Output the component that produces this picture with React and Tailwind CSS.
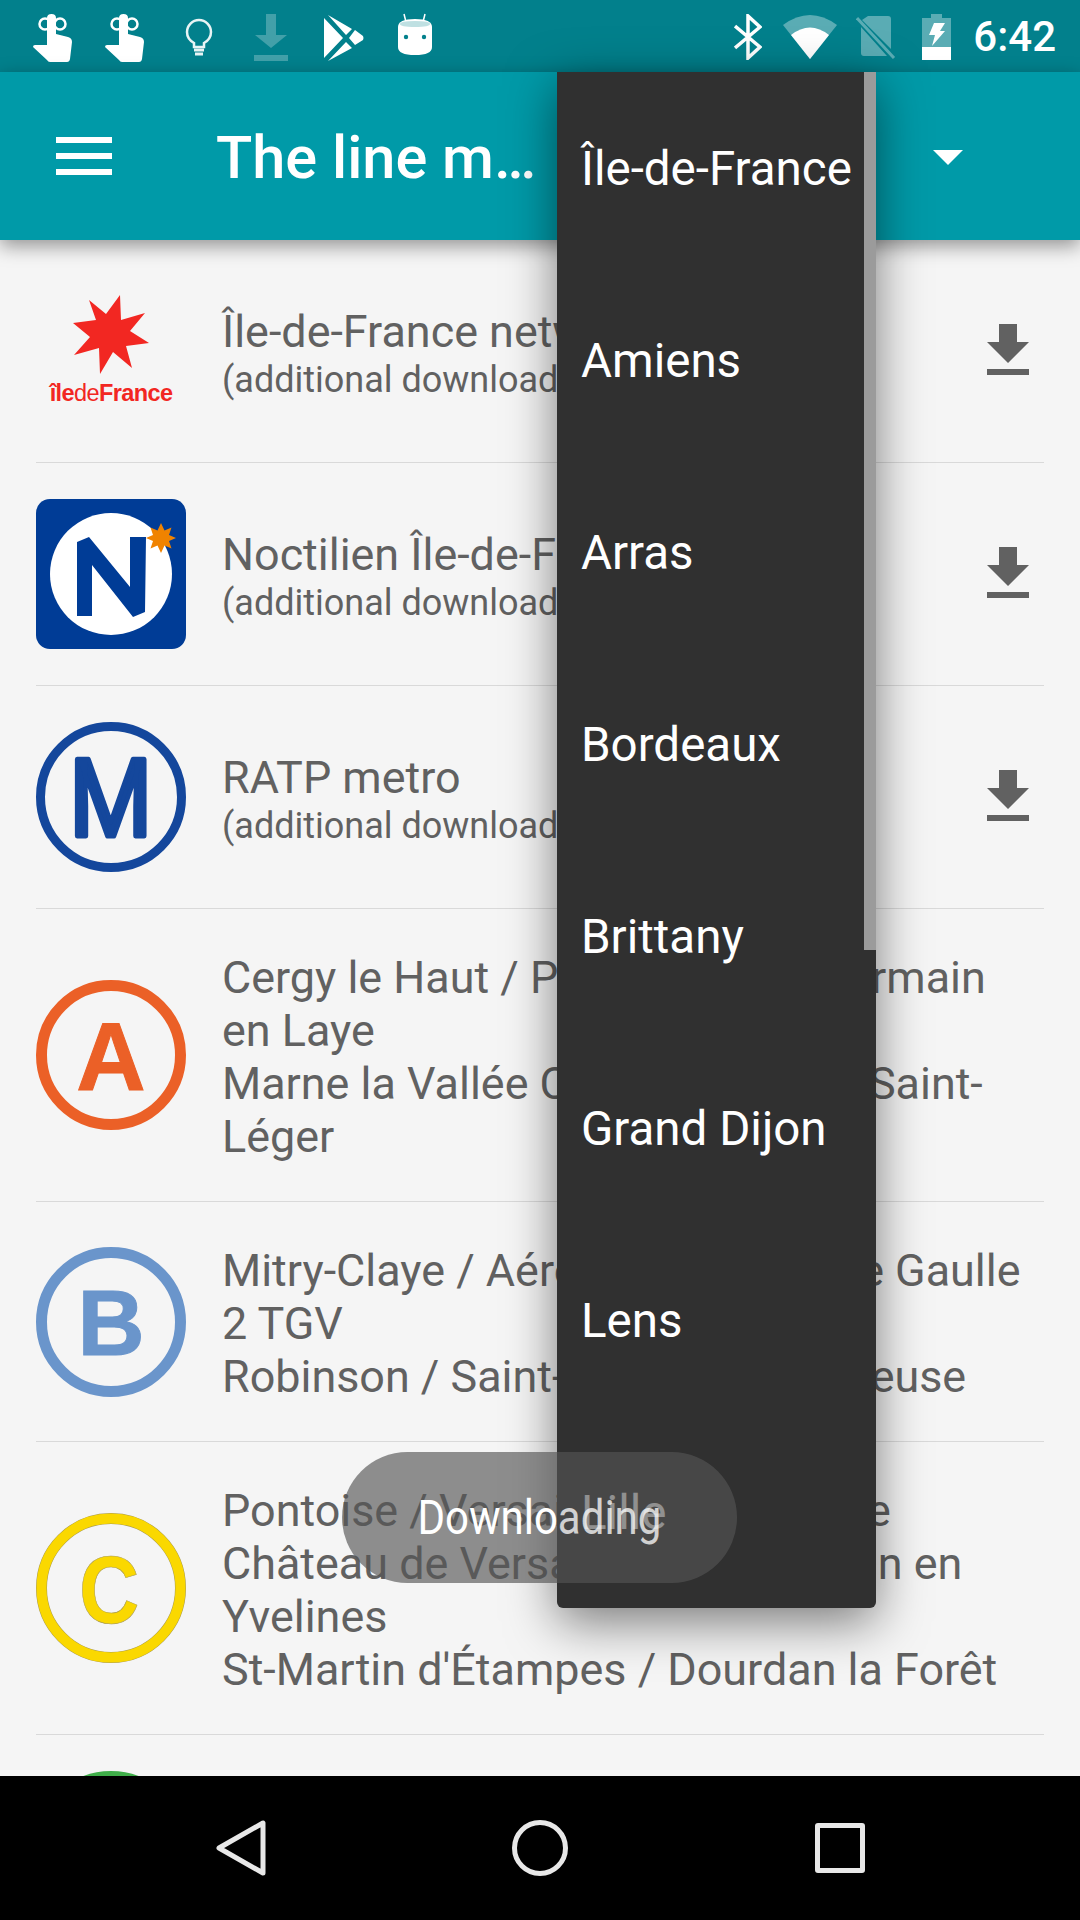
const FONT = { fontFamily: 'Roboto, sans-serif' };
const LOGO_FONT = '"Liberation Sans", sans-serif';

const HandIcon = ({ className }) => (
  <svg className={className} viewBox="0 0 40 48" fill="white">
    <path d="M14 18 L14 4 Q14 0 18.500 0 Q23 0 23 4 L23 20 L35 23 Q39 24 39 28 L37 45 Q36.500 48 34 48 L17 48 Q15 48 14 46 L0 33 Q0 31 2 31 L14 31 Z" />
    <circle cx="12" cy="10" r="5.500" fill="none" stroke="white" strokeWidth="2.500" />
    <circle cx="27" cy="10" r="5.500" fill="none" stroke="white" strokeWidth="2.500" />
  </svg>
);

const StatusBar = () => (
  <div className="h-[72px] shrink-0 bg-[#02808c] flex items-center">
    <div className="flex items-center pl-[33px] mt-[3px]">
      <HandIcon className="w-[40px] h-[48px]" />
      <HandIcon className="w-[40px] h-[48px] ml-[32px]" />
      <svg className="w-[28px] h-[40px] ml-[40px]" viewBox="0 0 28 40" fill="none" stroke="#e8f4f5" strokeWidth="2.500">
        <path d="M9 29 L9 25 Q2 21 2 14 A12 12 0 0 1 26 14 Q26 21 19 25 L19 29 Z" />
        <path d="M9 32 H19 M10 36 H18" strokeWidth="3" />
      </svg>
      <svg className="w-[34px] h-[48px] ml-[41px]" viewBox="0 0 34 48" fill="white" opacity="0.25">
        <path d="M12 0 H22 V21 H33 L17 34 L1 21 H12 Z M0 41 H34 V47 H0 Z" />
      </svg>
      <svg className="w-[40px] h-[46px] ml-[36px]" viewBox="0 0 40 46" fill="white">
        <path d="M0 3 L19 23 L0 43 Z M4 0 L28 14 L22 20 Z M4 46 L22 27 L28 33 Z M31 15 L39 21 Q40 23 39 25 L31 30 L25 23 Z" />
      </svg>
      <svg className="w-[36px] h-[44px] ml-[33px] mb-[6px]" viewBox="0 0 36 44" fill="white">
        <path d="M7 1 L9 9 M28 1 L26 9" stroke="white" strokeWidth="1.500" />
        <path d="M1 14 Q1 6 18 6 Q35 6 35 14 L35 34 Q35 42 18 42 Q1 42 1 34 Z" />
        <path d="M3 11 Q3 8 18 8 Q33 8 33 11 Q33 14 18 14 Q3 14 3 11 Z" fill="#bfe0e2" />
        <circle cx="9" cy="24" r="2.200" fill="#02808c" />
        <circle cx="27" cy="24" r="2.200" fill="#02808c" />
      </svg>
    </div>
    <div className="ml-auto flex items-center pr-[24px] mt-[2px]">
      <svg className="w-[28px] h-[46px]" viewBox="0 0 28 46" fill="none" stroke="white" strokeWidth="3.500">
        <path d="M1 12 L26 33 L14 44 L14 2 L26 13 L1 34" />
      </svg>
      <svg className="w-[54px] h-[44px] ml-[21px]" viewBox="0 0 54 44">
        <path d="M0 10 Q27 -10 54 10 L27 44 Z" fill="white" opacity="0.35" />
        <path d="M8 20 Q27 5 46 20 L27 44 Z" fill="white" />
      </svg>
      <svg className="w-[40px] h-[44px] ml-[19px]" viewBox="0 0 40 44" fill="white" opacity="0.35">
        <path d="M12 1 H32 Q35 1 35 4 V34 L6 5 Z M5 12 L31 41 H8 Q5 41 5 38 Z" />
        <path d="M1 3 L38 43" stroke="white" strokeWidth="3" />
      </svg>
      <svg className="w-[29px] h-[46px] ml-[26px]" viewBox="0 0 29 46">
        <path d="M9 0 H20 V4 H29 V46 H0 V4 H9 Z" fill="white" opacity="0.35" />
        <path d="M0 33 H29 V46 H0 Z" fill="white" />
        <path d="M12 9 H23 L18 17 H23 L10 32 L13 21 H7 Z" fill="white" />
      </svg>
      <span className="ml-[22px] text-[42px] leading-none text-white font-medium">6:42</span>
    </div>
  </div>
);

const Toolbar = () => (
  <div className="h-[168px] shrink-0 bg-[#009aa8] flex items-center relative z-10 shadow-[0_6px_18px_rgba(0,0,0,0.4)]">
    <div className="ml-[56px] w-[56px] flex flex-col gap-[10px]">
      <div className="h-[6px] bg-white" />
      <div className="h-[6px] bg-white" />
      <div className="h-[6px] bg-white" />
    </div>
    <div className="ml-[104px] mt-[6px] text-[59.500px] leading-none font-medium text-white whitespace-nowrap">The line m…</div>
    <div className="ml-auto mr-[117px] mt-[3px] w-0 h-0 border-l-[15px] border-r-[15px] border-t-[15px] border-l-transparent border-r-transparent border-t-white" />
  </div>
);

const DownloadIcon = () => (
  <svg className="w-[72px] h-[72px] shrink-0" viewBox="0 0 24 24" fill="#616161">
    <path d="M19 9h-4V3H9v6H5l7 7 7-7zM5 18v2h14v-2H5z" />
  </svg>
);

const IdfLogo = () => (
  <div className="w-[150px] h-[150px] flex flex-col items-center pt-[19px] shrink-0">
    <svg className="w-[76px] h-[79px]" viewBox="0 0 76 79" fill="#f22722">
      <path d="M16 5 L33 19 L47 0 L48 25 L72 18 L57 36 L76 48 L53 51 L59 73 L40 57 L27 79 L26 53 L1 60 L17 42 L0 28 L23 25 Z" />
    </svg>
    <div className="mt-[9px] text-[23.500px] leading-[20px] text-[#f22722] font-bold tracking-[-0.6px] whitespace-nowrap" style={{ fontFamily: LOGO_FONT }}>
      île<span className="font-normal">de</span>France
    </div>
  </div>
);

const NoctilienLogo = () => (
  <svg className="w-[150px] h-[150px] shrink-0" viewBox="0 0 150 150">
    <rect width="150" height="150" rx="14" fill="#003c96" />
    <circle cx="75" cy="75" r="61" fill="white" />
    <path d="M41 43 L53 38 L94 88 L94 38 L110 38 L109 113 L97 118 L56 66 L56 117 L41 117 Z" fill="#003c96" />
    <path d="M125 24 L128.500 31.500 L135.500 28.500 L133 36 L140 39 L133 42 L135.500 49.500 L128.500 46.500 L125 54 L121.500 46.500 L114.500 49.500 L117 42 L110 39 L117 36 L114.500 28.500 L121.500 31.500 Z" fill="#f08300" />
  </svg>
);

const RoundLogo = ({ color, stroke, letter, size, textStroke = 0, children }) => (
  <svg className="w-[150px] h-[150px] shrink-0" viewBox="0 0 150 150">
    <circle cx="75" cy="75" r={75 - stroke / 2} fill="none" stroke={color} strokeWidth={stroke} />
    {children || (
      <text x="75" y="75" dy="0.36em" textAnchor="middle" fontSize={size} fontWeight="700" fill={color} stroke={color} strokeWidth={textStroke} fontFamily={LOGO_FONT}>
        {letter}
      </text>
    )}
  </svg>
);

const Row = ({ logo, title, sub, lines }) => (
  <div className={`mx-[36px] flex items-center border-b border-[#d9d9d9] ${lines ? 'py-[40px]' : 'py-[36px]'}`}>
    {logo}
    <div className={`ml-[36px] flex-1 min-w-0 text-[#616161] ${lines ? 'translate-y-[2px] pr-[6px]' : 'pt-[10px]'}`}>
      {lines ? (
        lines.map((line) => (
          <div key={line} className="text-[44.900px] leading-[53px]">{line}</div>
        ))
      ) : (
        <>
          <div className="text-[44.900px] leading-[48px] whitespace-nowrap">{title}</div>
          <div className="text-[36px] leading-[48px] whitespace-nowrap">{sub}</div>
        </>
      )}
    </div>
    {!lines && <DownloadIcon />}
  </div>
);

const CITIES = ['Île-de-France', 'Amiens', 'Arras', 'Bordeaux', 'Brittany', 'Grand Dijon', 'Lens', 'Lille'];

export default function App() {
  return (
    <div className="w-[1080px] h-[1920px] flex flex-col relative overflow-hidden bg-[#f5f5f5]" style={FONT}>
      <StatusBar />
      <Toolbar />
      <div className="flex-1 min-h-0 overflow-hidden">
        <Row logo={<IdfLogo />} title="Île-de-France network" sub="(additional download required)" />
        <Row logo={<NoctilienLogo />} title="Noctilien Île-de-France" sub="(additional download required)" />
        <Row
          logo={
            <RoundLogo color="#14479c" stroke={9}>
              <text x="85" y="75" dy="0.36em" textAnchor="middle" fontSize="108" fontWeight="400" fill="#14479c" stroke="#14479c" strokeWidth="5" strokeLinejoin="round" fontFamily="Roboto, sans-serif" transform="scale(0.88 1)">M</text>
            </RoundLogo>
          }
          title="RATP metro"
          sub="(additional download required)"
        />
        <Row
          logo={<RoundLogo color="#eb6027" stroke={11} letter="A" size={96} textStroke={1} />}
          lines={['Cergy le Haut / Poissy / Saint-Germain en Laye', 'Marne la Vallée Chessy / Boissy Saint-Léger']}
        />
        <Row
          logo={<RoundLogo color="#6a95cb" stroke={11} letter="B" size={93} textStroke={1} />}
          lines={['Mitry-Claye / Aéroport Charles de Gaulle 2 TGV', 'Robinson / Saint-Rémy lès Chevreuse']}
        />
        <Row
          logo={
            <svg className="w-[150px] h-[150px] shrink-0" viewBox="0 0 150 150">
              <circle cx="75" cy="75" r="69.500" fill="none" stroke="#a89a50" strokeWidth="11" />
              <circle cx="75" cy="75" r="69.500" fill="none" stroke="#fad800" strokeWidth="10" />
              <text x="84" y="75" dy="0.36em" textAnchor="middle" fontSize="96" fontWeight="700" fill="#fad800" stroke="#a89a50" strokeWidth="0.6" fontFamily={LOGO_FONT} transform="scale(0.87 1)">C</text>
            </svg>
          }
          lines={['Pontoise / Versailles Rive Gauche', 'Château de Versailles / St-Quentin en Yvelines', "St-Martin d'Étampes / Dourdan la Forêt"]}
        />
        <div className="mx-[36px] py-[36px]">
          <RoundLogo color="#3fae49" stroke={11}>
            <g />
          </RoundLogo>
        </div>
      </div>
      <div className="h-[144px] shrink-0 bg-black flex items-center pl-[216px] relative z-10">
        <svg className="w-[52px] h-[56px]" viewBox="0 0 52 56" fill="none" stroke="#e8e8e8" strokeWidth="5" strokeLinejoin="round">
          <path d="M47 3 V53 L3 28 Z" />
        </svg>
        <div className="ml-[244px] w-[56px] h-[56px] rounded-full border-[5px] border-[#e8e8e8]" />
        <div className="ml-[247px] w-[50px] h-[50px] rounded-[3px] border-[5px] border-[#e8e8e8]" />
      </div>

      {/* dropdown menu */}
      <div className="absolute left-[557px] top-[72px] w-[319px] h-[1536px] z-20 bg-[#303030] rounded-[6px] rounded-t-none overflow-hidden text-white shadow-[0_14px_50px_rgba(0,0,0,0.5)]">
        {CITIES.map((city) => (
          <div key={city} className="h-[192px] flex items-center pl-[24px] pt-[3px] text-[47.500px] leading-none whitespace-nowrap">{city}</div>
        ))}
        <div className="absolute right-0 top-0 w-[12px] h-[878px] bg-[#9b9b9b]" />
      </div>

      {/* toast */}
      <div className="absolute left-[342px] top-[1452px] w-[395px] h-[131px] z-30 rounded-full bg-[#555555]/65 flex items-center justify-center text-[48px] text-white">
        <span className="inline-block scale-x-[0.875] whitespace-nowrap">
          Downlo<span className="text-white/75">ading</span>
        </span>
      </div>
    </div>
  );
}
